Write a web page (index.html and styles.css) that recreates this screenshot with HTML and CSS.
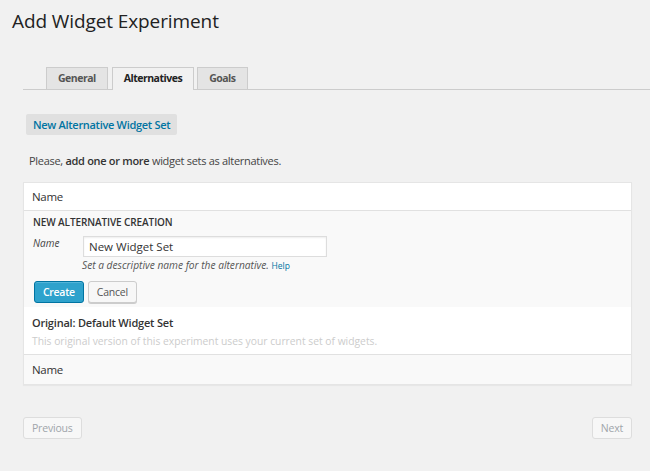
FILE: index.html
```html
<!DOCTYPE html>
<html>
<head>
<meta charset="utf-8">
<link rel="stylesheet" href="styles.css">
</head>
<body>
<div class="wrap">
  <h1 class="title">Add Widget Experiment</h1>
  <div class="tabs">
    <span class="tab">General</span>
    <span class="tab active">Alternatives</span>
    <span class="tab">Goals</span>
  </div>
  <div class="toolbar">
    <span class="btn-new">New Alternative Widget Set</span>
  </div>
  <p class="intro">Please, <b>add one or more</b> widget sets as alternatives.</p>
  <div class="card">
    <div class="row-head">Name</div>
    <div class="creation">
      <div class="creation-title">NEW ALTERNATIVE CREATION</div>
      <div class="field">
        <label class="field-label">Name</label>
        <div class="field-body">
          <div class="input">New Widget Set</div>
          <div class="desc">Set a descriptive name for the alternative. <span class="help">Help</span></div>
        </div>
      </div>
      <div class="actions">
        <span class="btn btn-primary">Create</span>
        <span class="btn btn-secondary">Cancel</span>
      </div>
    </div>
    <div class="original">
      <div class="original-title">Original: Default Widget Set</div>
      <div class="original-desc">This original version of this experiment uses your current set of widgets.</div>
    </div>
    <div class="row-foot">Name</div>
  </div>
  <div class="nav">
    <span class="btn-nav">Previous</span>
    <span class="btn-nav">Next</span>
  </div>
</div>
</body>
</html>
```

FILE: styles.css
```css
html, body {
  margin: 0;
  padding: 0;
  background: #f1f1f1;
}
body {
  font-family: "Open Sans", "Liberation Sans", sans-serif;
  color: #444;
  width: 650px;
  height: 471px;
  overflow: hidden;
}
.wrap {
  padding: 0 18px 0 23px;
}
.title {
  margin: 0 0 0 -11px;
  padding-top: 9px;
  font-size: 19px;
  line-height: 24px;
  font-weight: 400;
  letter-spacing: -0.1px;
  color: #222;
}
.tabs {
  margin-top: 34px;
  margin-right: -18px;
  padding-left: 23px;
  border-bottom: 1px solid #ccc;
  display: flex;
  gap: 4px;
  height: 22px;
  align-items: flex-start;
}
.tab {
  box-sizing: border-box;
  height: 22px;
  border: 1px solid #ccc;
  border-bottom: none;
  background: #e4e4e4;
  color: #555;
  font-size: 10.5px;
  font-weight: 700;
  letter-spacing: -0.5px;
  line-height: 20px;
  padding: 0 11px;
}
.tab.active {
  background: #f1f1f1;
  color: #222;
  height: 23px;
  margin-right: -1px;
  position: relative;
}
.toolbar {
  margin-top: 24px;
  padding-left: 3px;
  display: flex;
}
.btn-new {
  background: #e0e0e0;
  color: #0074a2;
  font-size: 11px;
  font-weight: 600;
  letter-spacing: -0.3px;
  line-height: 21px;
  padding: 0 7px;
  border-radius: 2px;
}
.intro {
  margin: 18px 0 0 6px;
  font-size: 11px;
  letter-spacing: -0.3px;
  line-height: 16px;
  color: #444;
}
.intro b {
  font-weight: 600;
  color: #333;
}
.card {
  margin-top: 13px;
  border: 1px solid #e5e5e5;
  box-shadow: 0 1px 1px rgba(0,0,0,0.04);
  background: #fff;
}
.row-head, .row-foot {
  padding: 0 8px;
  font-size: 11.5px;
  letter-spacing: -0.3px;
  color: #333;
}
.row-head {
  height: 27px;
  line-height: 27px;
  border-bottom: 1px solid #e1e1e1;
}
.row-foot {
  height: 29px;
  line-height: 29px;
  border-top: 1px solid #e1e1e1;
  background: #f9f9f9;
}
.creation {
  background: #f9f9f9;
  padding: 4px 10px 4px 9px;
}
.creation-title {
  font-size: 10px;
  font-weight: 600;
  letter-spacing: -0.1px;
  line-height: 14px;
  color: #333;
}
.field {
  display: flex;
  margin-top: 7px;
}
.field-label {
  width: 50px;
  font-size: 10px;
  font-style: italic;
  color: #444;
  line-height: 14px;
}
.field-body {
  display: flex;
  flex-direction: column;
}
.input {
  box-sizing: border-box;
  width: 244px;
  height: 21px;
  border: 1px solid #ddd;
  background: #fff;
  font-size: 11.5px;
  line-height: 19px;
  padding: 0 5px;
  color: #333;
  box-shadow: inset 0 1px 2px rgba(0,0,0,0.07);
}
.desc {
  margin-top: 2px;
  margin-left: -1px;
  font-size: 10.2px;
  font-style: italic;
  color: #555;
  line-height: 13px;
}
.help {
  font-style: normal;
  font-size: 8.5px;
  color: #0074a2;
}
.actions {
  margin-top: 9px;
  margin-left: 1px;
  display: flex;
  gap: 4px;
}
.btn {
  box-sizing: border-box;
  height: 22px;
  line-height: 20px;
  font-size: 10.5px;
  letter-spacing: -0.3px;
  padding: 0 8px;
  border-radius: 3px;
  border: 1px solid #ccc;
}
.btn-primary {
  background: #2ea2cc;
  border-color: #0074a2;
  color: #fff;
  font-weight: 600;
  box-shadow: inset 0 1px 0 rgba(120,200,230,0.5);
}
.btn-secondary {
  background: #f7f7f7;
  color: #555;
  letter-spacing: -0.2px;
  box-shadow: 0 1px 0 #ccc;
}
.original {
  background: #fff;
  padding: 8px 8px 0 8px;
  height: 39px;
}
.original-title {
  font-size: 11px;
  font-weight: 600;
  letter-spacing: -0.2px;
  line-height: 15px;
  color: #333;
}
.original-desc {
  margin-top: 5px;
  font-size: 10.3px;
  line-height: 13px;
  color: #ccc;
}
.nav {
  margin-top: 32px;
  display: flex;
  justify-content: space-between;
}
.btn-nav {
  box-sizing: border-box;
  height: 22px;
  line-height: 20px;
  padding: 0 8px;
  font-size: 10.5px;
  letter-spacing: -0.2px;
  color: #a0a5aa;
  background: #f7f7f7;
  border: 1px solid #ddd;
  border-radius: 3px;
}
```
